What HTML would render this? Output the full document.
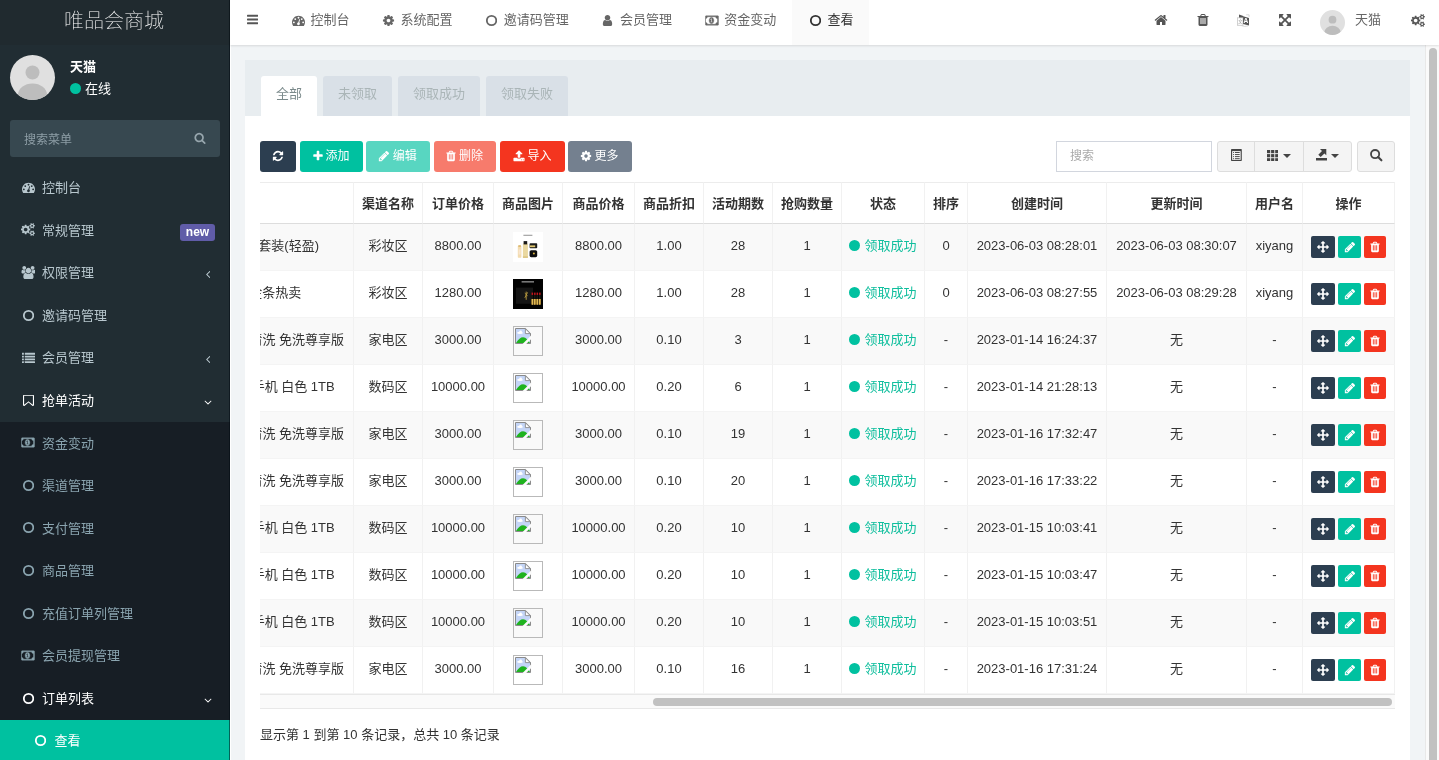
<!DOCTYPE html><html lang="zh-CN"><head><meta charset="utf-8"><title>唯品会商城</title><style>
*{box-sizing:border-box}
html,body{margin:0;padding:0}
body{width:1439px;height:760px;overflow:hidden;position:relative;background:#f1f4f6;color:#444;
 font-family:"Liberation Sans","Noto Sans CJK SC",sans-serif;font-size:13px;line-height:18.57px}
svg.ic{display:block;position:absolute}
#side,#nav,#panel{will-change:transform}
.abs{position:absolute}
/* sidebar */
#side{position:absolute;left:0;top:0;width:230px;height:760px;background:#212d33;overflow:hidden}
#logo{position:absolute;left:0;top:0;width:230px;height:45px;background:#202a2f;color:#fff;text-align:center;
 font-size:20px;font-weight:100;line-height:43px;letter-spacing:0;padding-right:2px}
#avatar{position:absolute;left:10px;top:55px;width:45px;height:45px;border-radius:50%;background:#e0e0e0;overflow:hidden}
#uname{position:absolute;left:70px;top:57px;color:#fff;font-weight:bold;font-size:13px;line-height:19px}
#ustat{position:absolute;left:85px;top:79px;color:#fff;font-size:13px;line-height:19px}
#sform{position:absolute;left:10px;top:120px;width:210px;height:37px;background:#374850;border-radius:3px}
#sform span{position:absolute;left:14px;top:10.5px;font-size:12px;color:#8e9ea6;line-height:19px}
.mi{position:absolute;left:0;width:230px;height:42.57px;color:#b8c7ce;font-size:13px;line-height:42.57px}
.mi .t{position:absolute;left:42px;top:1px;white-space:nowrap}
.mi.sub{color:#8aa4af}
.mi.on{color:#fff}
.mi.l3 .t{left:54.5px;top:0}
#submenu{position:absolute;left:0;top:422px;width:230px;height:340px;background:#171e25}
#active{position:absolute;left:0;top:720px;width:230px;height:42px;background:#00c1a0}
.lbl{position:absolute;left:180px;top:15.5px;width:35px;height:17px;border-radius:3px;background:#605ca8;color:#fff;
 font-weight:bold;font-size:12px;line-height:16px;text-align:center}
/* navbar */
#nav{position:absolute;left:230px;top:0;width:1209px;z-index:5;height:45px;background:#fff;box-shadow:0 1px 2px rgba(0,0,0,.11)}
.tab{position:absolute;top:0;height:45px;color:#666;font-size:13px;line-height:45px;white-space:nowrap}
.tab .t{position:absolute;left:35.3px;top:-3.5px}
.tab.on{background:#fafafa;color:#333}
#nuser{position:absolute;left:1125px;top:-3px;font-size:13px;line-height:45px;color:#666}
/* content */
#panel{position:absolute;left:245px;top:60px;width:1165px;height:720px;background:#fff}
#phead{position:absolute;left:0;top:0;width:1165px;height:56px;background:#e8edf0}
.ptab{position:absolute;top:16px;height:40px;border-radius:3px 3px 0 0;background:#d9e0e7;color:#aab5b7;font-size:13px;line-height:36px;text-align:center}
.ptab.on{background:#fff;color:#7b8a8b}
.btn{position:absolute;top:81px;height:31px;border-radius:3px;color:#fff;font-size:12px;line-height:31px;white-space:nowrap}
.btn .t{position:absolute;top:0}
.gbtn{position:absolute;top:81px;height:31px;background:#f4f4f4;border:1px solid #ddd}
#sinput{position:absolute;left:811px;top:81px;width:156px;height:31px;border:1px solid #d2d6de;background:#fff;color:#aaa;font-size:12px;line-height:29px;padding-left:13px}
/* table */
#twrap{position:absolute;left:15px;top:122px;width:1135px;height:512px;overflow:hidden}
table{position:absolute;right:0;top:0;border-collapse:separate;border-spacing:0;table-layout:fixed;font-size:13px;color:#333}
th,td{padding:0;text-align:center;white-space:nowrap;border-left:1px solid #f1f1f1;overflow:visible}
th{height:41px;border-top:1px solid #ececec;border-bottom:1px solid #ddd;font-weight:bold;line-height:38px;padding-top:2px;color:#333}
td{height:47px;border-bottom:1px solid #f4f4f4;line-height:44px;position:relative;vertical-align:top}
th:first-child,td:first-child{border-left:0}td:first-child{text-align:right}
th:last-child,td:last-child{border-right:1px solid #f1f1f1}
tr.odd td{background:#f9f9f9}
.st{color:#0fbe9d}
.img{display:inline-block;width:30px;height:30px;vertical-align:top;margin-top:8px}
.brk{border:1px solid #c0c0c0;background:#fff}
.ob{position:absolute;top:12px;height:22px;border-radius:2px}
#hscroll{position:absolute;left:15px;top:634px;width:1135px;height:15px;background:#fafafa;border-top:1px solid #e8e8e8;border-bottom:1px solid #e8e8e8}
#hthumb{position:absolute;left:393px;top:3px;width:739px;height:8px;border-radius:4px;background:#c1c1c1}
#pinfo{position:absolute;left:15px;top:665px;font-size:13px;color:#333;line-height:20px}
#vscroll{position:absolute;left:1425px;top:45px;width:14px;height:715px;background:#fafafa;border-left:1px solid #e8e8e8}
#vthumb{position:absolute;left:3px;top:3px;width:8px;height:800px;border-radius:4px;background:#c1c1c1}

.dot{display:inline-block;width:11px;height:11px;border-radius:50%;background:#00c1a0;margin-right:4px;vertical-align:middle;position:relative;top:-1px}

#side:after{content:'';position:absolute;right:0;top:0;width:1px;height:760px;background:rgba(0,8,16,.5)}
#wline{position:absolute;left:230px;top:45px;width:1px;height:715px;background:#fff}
</style></head><body>
<div id="side">
<div id="logo">唯品会商城</div>
<div id="avatar"><svg width="45" height="45" viewBox="0 0 45 45"><circle cx="22.5" cy="17.5" r="7" fill="#bdbdbd"/><ellipse cx="22.5" cy="40" rx="14.5" ry="11.5" fill="#bdbdbd"/></svg></div>
<div id="uname">天猫</div>
<div class="abs" style="left:70px;top:82.8px;width:11px;height:11px;border-radius:50%;background:#00c1a0"></div>
<div id="ustat">在线</div>
<div id="sform"><span>搜索菜单</span><svg class="ic" width="12.00" height="12.00" viewBox="0 0 1792 1792" style="left:184.30px;top:12.30px;"><path fill="#97a6ad" d="M1216 832q0-185-131.500-316.500t-316.500-131.500-316.500 131.500-131.500 316.500 131.500 316.500 316.500 131.500 316.500-131.500 131.500-316.500zm512 832q0 52-38 90t-90 38q-54 0-90-38l-343-342q-179 124-399 124-143 0-273.500-55.500t-225-150-150-225-55.500-273.500 55.500-273.500 150-225 225-150 273.500-55.500 273.500 55.500 225 150 150 225 55.500 273.500q0 220-124 399l343 343q37 37 37 90z"/></svg></div>
<div id="submenu"></div><div id="active"></div>
<div class="mi " style="top:166.10px"><svg class="ic" width="13.00" height="13.00" viewBox="0 0 1792 1792" style="left:21.85px;top:14.79px;"><path fill="#b8c7ce" d="M384 1152q0-53-37.500-90.500t-90.500-37.500-90.500 37.500-37.500 90.500 37.500 90.500 90.500 37.500 90.500-37.500 37.500-90.500zm192-448q0-53-37.500-90.500t-90.500-37.500-90.500 37.500-37.500 90.500 37.500 90.500 90.500 37.500 90.500-37.500 37.500-90.500zm428 481l101-382q6-26-7.500-48.500t-38.500-29.500-48 6.500-30 39.500l-101 382q-60 5-107 43.500t-63 98.500q-20 77 20 146t117 89 146-20 89-117q16-60-6-117t-72-91zm660-33q0-53-37.500-90.500t-90.500-37.500-90.500 37.500-37.500 90.500 37.500 90.500 90.500 37.500 90.500-37.500 37.500-90.500zm-640-640q0-53-37.500-90.500t-90.500-37.500-90.500 37.500-37.500 90.500 37.500 90.500 90.500 37.500 90.500-37.500 37.500-90.500zm448 192q0-53-37.500-90.500t-90.500-37.500-90.500 37.500-37.500 90.500 37.500 90.500 90.500 37.500 90.500-37.500 37.500-90.500zm320 448q0 261-141 483-19 29-54 29h-1402q-35 0-54-29-141-221-141-483 0-182 71-348t191-286 286-191 348-71 348 71 286 191 191 286 71 348z"/></svg><span class="t">控制台</span></div>
<div class="mi " style="top:208.67px"><svg class="ic" width="13.93" height="13.00" viewBox="0 0 1920 1792" style="left:21.39px;top:14.79px;"><path fill="#b8c7ce" d="M896 896q0-106-75-181t-181-75-181 75-75 181 75 181 181 75 181-75 75-181zm768 512q0-52-38-90t-90-38-90 38-38 90q0 53 37.500 90.500t90.500 37.500 90.500-37.500 37.500-90.500zm0-1024q0-52-38-90t-90-38-90 38-38 90q0 53 37.500 90.500t90.500 37.500 90.500-37.500 37.500-90.500zm-384 421v185q0 10-7 19.500t-16 10.500l-155 24q-11 35-32 76 34 48 90 115 7 11 7 20 0 12-7 19-23 30-82.500 89.500t-78.500 59.500q-11 0-21-7l-115-90q-37 19-77 31-11 108-23 155-7 24-30 24h-186q-11 0-20-7.500t-10-17.500l-23-153q-34-10-75-31l-118 89q-7 7-20 7-11 0-21-8-144-133-144-160 0-9 7-19 10-14 41-53t47-61q-23-44-35-82l-152-24q-10-1-17-9.500t-7-19.500v-185q0-10 7-19.500t16-10.500l155-24q11-35 32-76-34-48-90-115-7-11-7-20 0-12 7-20 22-30 82-89t79-59q11 0 21 7l115 90q34-18 77-32 11-108 23-154 7-24 30-24h186q11 0 20 7.500t10 17.500l23 153q34 10 75 31l118-89q8-7 20-7 11 0 21 8 144 133 144 160 0 8-7 19-12 16-42 54t-45 60q23 48 34 82l152 23q10 2 17 10.500t7 19.500zm640 533v140q0 16-149 31-12 27-30 52 51 113 51 138 0 4-4 7-122 71-124 71-8 0-46-47t-52-68q-20 2-30 2t-30-2q-14 21-52 68t-46 47q-2 0-124-71-4-3-4-7 0-25 51-138-18-25-30-52-149-15-149-31v-140q0-16 149-31 13-29 30-52-51-113-51-138 0-4 4-7 4-2 35-20t59-34 30-16q8 0 46 46.500t52 67.500q20-2 30-2t30 2q51-71 92-112l6-2q4 0 124 70 4 3 4 7 0 25-51 138 17 23 30 52 149 15 149 31zm0-1024v140q0 16-149 31-12 27-30 52 51 113 51 138 0 4-4 7-122 71-124 71-8 0-46-47t-52-68q-20 2-30 2t-30-2q-14 21-52 68t-46 47q-2 0-124-71-4-3-4-7 0-25 51-138-18-25-30-52-149-15-149-31v-140q0-16 149-31 13-29 30-52-51-113-51-138 0-4 4-7 4-2 35-20t59-34 30-16q8 0 46 46.500t52 67.500q20-2 30-2t30 2q51-71 92-112l6-2q4 0 124 70 4 3 4 7 0 25-51 138 17 23 30 52 149 15 149 31z"/></svg><span class="t">常规管理</span><span class="lbl">new</span></div>
<div class="mi " style="top:251.24px"><svg class="ic" width="13.93" height="13.00" viewBox="0 0 1920 1792" style="left:21.39px;top:14.79px;"><path fill="#b8c7ce" d="M657 896q-162 5-265 128h-134q-82 0-138-40.500t-56-118.500q0-353 124-353 6 0 43.500 21t97.500 42.500 119 21.500q67 0 133-23-5 37-5 66 0 139 81 256zm1071 637q0 120-73 189.500t-194 69.500h-874q-121 0-194-69.500t-73-189.500q0-53 3.500-103.500t14-109 26.500-108.500 43-97.500 62-81 85.500-53.500 111.500-20q10 0 43 21.500t73 48 107 48 135 21.500 135-21.500 107-48 73-48 43-21.500q61 0 111.500 20t85.500 53.500 62 81 43 97.500 26.500 108.500 14 109 3.500 103.500zm-1024-1277q0 106-75 181t-181 75-181-75-75-181 75-181 181-75 181 75 75 181zm704 384q0 159-112.500 271.500t-271.500 112.500-271.500-112.500-112.500-271.500 112.500-271.500 271.500-112.500 271.500 112.500 112.500 271.500zm576 225q0 78-56 118.500t-138 40.500h-134q-103-123-265-128 81-117 81-256 0-29-5-66 66 23 133 23 59 0 119-21.500t97.500-42.500 43.500-21q124 0 124 353zm-128-609q0 106-75 181t-181 75-181-75-75-181 75-181 181-75 181 75 75 181z"/></svg><span class="t">权限管理</span><svg class="ic" width="4.64" height="13.00" viewBox="0 0 640 1792" style="left:205.58px;top:16.98px;"><path fill="#b8c7ce" d="M595 576q0 13-10 23l-393 393 393 393q10 10 10 23t-10 23l-50 50q-10 10-23 10t-23-10l-466-466q-10-10-10-23t10-23l466-466q10-10 23-10t23 10l50 50q10 10 10 23z" transform="translate(13,-96)"/></svg></div>
<div class="mi " style="top:293.81px"><svg class="ic" width="11.14" height="13.00" viewBox="0 0 1536 1792" style="left:22.78px;top:14.79px;"><circle cx="768" cy="896" r="650" fill="none" stroke="#b8c7ce" stroke-width="250"/></svg><span class="t">邀请码管理</span></div>
<div class="mi " style="top:336.38px"><svg class="ic" width="13.00" height="13.00" viewBox="0 0 1792 1792" style="left:21.85px;top:14.79px;"><rect x="0" y="256" width="256" height="256" rx="32" fill="#b8c7ce"/><rect x="384" y="256" width="1408" height="256" rx="32" fill="#b8c7ce"/><rect x="0" y="640" width="256" height="256" rx="32" fill="#b8c7ce"/><rect x="384" y="640" width="1408" height="256" rx="32" fill="#b8c7ce"/><rect x="0" y="1024" width="256" height="256" rx="32" fill="#b8c7ce"/><rect x="384" y="1024" width="1408" height="256" rx="32" fill="#b8c7ce"/><rect x="0" y="1408" width="256" height="256" rx="32" fill="#b8c7ce"/><rect x="384" y="1408" width="1408" height="256" rx="32" fill="#b8c7ce"/></svg><span class="t">会员管理</span><svg class="ic" width="4.64" height="13.00" viewBox="0 0 640 1792" style="left:205.58px;top:16.98px;"><path fill="#b8c7ce" d="M595 576q0 13-10 23l-393 393 393 393q10 10 10 23t-10 23l-50 50q-10 10-23 10t-23-10l-466-466q-10-10-10-23t10-23l466-466q10-10 23-10t23 10l50 50q10 10 10 23z" transform="translate(13,-96)"/></svg></div>
<div class="mi on" style="top:378.95px"><svg preserveAspectRatio="none" class="ic" width="11.00" height="13.00" viewBox="0 0 1280 1792" style="left:22.85px;top:14.79px;"><path fill="#fff" d="M1152 256h-1024v1242l423-406 89-85 89 85 423 406v-1242zm12-128q23 0 44 9 33 13 52.500 41t19.500 62v1289q0 34-19.500 62t-52.500 41q-19 8-44 8-48 0-83-32l-441-424-441 424q-36 33-83 33-23 0-44-9-33-13-52.500-41t-19.500-62v-1289q0-34 19.500-62t52.500-41q21-9 44-9h1048z"/></svg><span class="t">抢单活动</span><svg class="ic" width="8.04" height="12.50" viewBox="0 0 1152 1792" style="left:203.98px;top:16.64px;"><path fill="#fff" d="M1075 736q0 13-10 23l-466 466q-10 10-23 10t-23-10l-466-466q-10-10-10-23t10-23l50-50q10-10 23-10t23 10l393 393 393-393q10-10 23-10t23 10l50 50q10 10 10 23z"/></svg></div>
<div class="mi sub" style="top:421.52px"><svg class="ic" width="13.93" height="13.00" viewBox="0 0 1920 1792" style="left:21.39px;top:14.79px;"><path fill="#8aa4af" stroke="#8aa4af" stroke-width="60" d="M704 1152h384v-96h-128v-448h-114l-148 137 77 80q42-37 55-57h2v288h-128v96zm512-256q0 70-21 142t-59.500 134-101.500 101-138 39-138-39-101.500-101-59.500-134-21-142 21-142 59.500-134 101.500-101 138-39 138 39 101.500 101 59.500 134 21 142zm512 256v-512q-106 0-181-75t-75-181h-1152q0 106-75 181t-181 75v512q106 0 181 75t75 181h1152q0-106 75-181t181-75zm128-832v1152q0 26-19 45t-45 19h-1664q-26 0-45-19t-19-45v-1152q0-26 19-45t45-19h1664q26 0 45 19t19 45z"/></svg><span class="t">资金变动</span></div>
<div class="mi sub" style="top:464.09px"><svg class="ic" width="11.14" height="13.00" viewBox="0 0 1536 1792" style="left:22.78px;top:14.79px;"><circle cx="768" cy="896" r="650" fill="none" stroke="#8aa4af" stroke-width="250"/></svg><span class="t">渠道管理</span></div>
<div class="mi sub" style="top:506.66px"><svg class="ic" width="11.14" height="13.00" viewBox="0 0 1536 1792" style="left:22.78px;top:14.79px;"><circle cx="768" cy="896" r="650" fill="none" stroke="#8aa4af" stroke-width="250"/></svg><span class="t">支付管理</span></div>
<div class="mi sub" style="top:549.23px"><svg class="ic" width="11.14" height="13.00" viewBox="0 0 1536 1792" style="left:22.78px;top:14.79px;"><circle cx="768" cy="896" r="650" fill="none" stroke="#8aa4af" stroke-width="250"/></svg><span class="t">商品管理</span></div>
<div class="mi sub" style="top:591.80px"><svg class="ic" width="11.14" height="13.00" viewBox="0 0 1536 1792" style="left:22.78px;top:14.79px;"><circle cx="768" cy="896" r="650" fill="none" stroke="#8aa4af" stroke-width="250"/></svg><span class="t">充值订单列管理</span></div>
<div class="mi sub" style="top:634.37px"><svg class="ic" width="13.93" height="13.00" viewBox="0 0 1920 1792" style="left:21.39px;top:14.79px;"><path fill="#8aa4af" stroke="#8aa4af" stroke-width="60" d="M704 1152h384v-96h-128v-448h-114l-148 137 77 80q42-37 55-57h2v288h-128v96zm512-256q0 70-21 142t-59.500 134-101.500 101-138 39-138-39-101.500-101-59.500-134-21-142 21-142 59.500-134 101.500-101 138-39 138 39 101.500 101 59.500 134 21 142zm512 256v-512q-106 0-181-75t-75-181h-1152q0 106-75 181t-181 75v512q106 0 181 75t75 181h1152q0-106 75-181t181-75zm128-832v1152q0 26-19 45t-45 19h-1664q-26 0-45-19t-19-45v-1152q0-26 19-45t45-19h1664q26 0 45 19t19 45z"/></svg><span class="t">会员提现管理</span></div>
<div class="mi on" style="top:676.94px"><svg class="ic" width="11.14" height="13.00" viewBox="0 0 1536 1792" style="left:22.78px;top:14.79px;"><circle cx="768" cy="896" r="650" fill="none" stroke="#fff" stroke-width="250"/></svg><span class="t">订单列表</span><svg class="ic" width="8.04" height="12.50" viewBox="0 0 1152 1792" style="left:203.98px;top:16.64px;"><path fill="#fff" d="M1075 736q0 13-10 23l-466 466q-10 10-23 10t-23-10l-466-466q-10-10-10-23t10-23l50-50q10-10 23-10t23 10l393 393 393-393q10-10 23-10t23 10l50 50q10 10 10 23z"/></svg></div>
<div class="mi on l3" style="top:719.51px"><svg class="ic" width="11.14" height="13.00" viewBox="0 0 1536 1792" style="left:34.78px;top:14.79px;"><circle cx="768" cy="896" r="650" fill="none" stroke="#fff" stroke-width="250"/></svg><span class="t">查看</span></div>
</div>
<div id="nav">
<svg class="ic" width="11.14" height="13.00" viewBox="0 0 1536 1792" style="left:16.73px;top:12.80px;"><rect x="0" y="256" width="1536" height="256" rx="64" fill="#555"/><rect x="0" y="768" width="1536" height="256" rx="64" fill="#555"/><rect x="0" y="1280" width="1536" height="256" rx="64" fill="#555"/></svg>
<div class="tab " style="left:45.1px;width:89.3px"><svg class="ic" width="13.00" height="13.00" viewBox="0 0 1792 1792" style="left:16.85px;top:13.70px;"><path fill="#666" d="M384 1152q0-53-37.500-90.500t-90.500-37.500-90.500 37.500-37.500 90.500 37.500 90.500 90.500 37.500 90.500-37.500 37.500-90.500zm192-448q0-53-37.500-90.500t-90.500-37.500-90.500 37.500-37.500 90.500 37.500 90.500 90.500 37.500 90.500-37.500 37.500-90.500zm428 481l101-382q6-26-7.500-48.500t-38.500-29.500-48 6.500-30 39.500l-101 382q-60 5-107 43.500t-63 98.500q-20 77 20 146t117 89 146-20 89-117q16-60-6-117t-72-91zm660-33q0-53-37.500-90.500t-90.500-37.500-90.500 37.500-37.500 90.500 37.500 90.500 90.500 37.500 90.500-37.500 37.500-90.500zm-640-640q0-53-37.500-90.500t-90.500-37.500-90.500 37.500-37.500 90.500 37.500 90.500 90.500 37.500 90.500-37.500 37.500-90.500zm448 192q0-53-37.500-90.500t-90.500-37.500-90.500 37.500-37.500 90.500 37.500 90.500 90.500 37.500 90.500-37.500 37.500-90.500zm320 448q0 261-141 483-19 29-54 29h-1402q-35 0-54-29-141-221-141-483 0-182 71-348t191-286 286-191 348-71 348 71 286 191 191 286 71 348z"/></svg><span class="t">控制台</span></div>
<div class="tab " style="left:135.2px;width:102.3px"><svg class="ic" width="13.00" height="13.00" viewBox="0 0 1792 1792" style="left:16.85px;top:13.70px;"><path fill="#666" d="M1152 896q0-106-75-181t-181-75-181 75-75 181 75 181 181 75 181-75 75-181zm512-109v222q0 12-8 23t-20 13l-185 28q-19 54-39 91 35 50 107 138 10 12 10 25t-9 23q-27 37-99 108t-94 71q-12 0-26-9l-138-108q-44 23-91 38-16 136-29 186-7 28-36 28h-222q-14 0-24.500-8.500t-11.500-21.500l-28-184q-49-16-90-37l-141 107q-10 9-25 9-14 0-25-11-126-114-165-168-7-10-7-23 0-12 8-23 15-21 51-66.500t54-70.500q-27-50-41-99l-183-27q-13-2-21-12.500t-8-23.500v-222q0-12 8-23t19-13l186-28q14-46 39-92-40-57-107-138-10-12-10-24 0-10 9-23 26-36 98.500-107.500t94.500-71.500q13 0 26 10l138 107q44-23 91-38 16-136 29-186 7-28 36-28h222q14 0 24.500 8.500t11.500 21.500l28 184q49 16 90 37l142-107q9-9 24-9 13 0 25 10 129 119 165 170 7 8 7 22 0 12-8 23-15 21-51 66.500t-54 70.500q26 50 41 98l183 28q13 2 21 12.500t8 23.500z"/></svg><span class="t">系统配置</span></div>
<div class="tab " style="left:238.4px;width:115.3px"><svg class="ic" width="11.14" height="13.00" viewBox="0 0 1536 1792" style="left:17.78px;top:13.70px;"><circle cx="768" cy="896" r="650" fill="none" stroke="#666" stroke-width="250"/></svg><span class="t">邀请码管理</span></div>
<div class="tab " style="left:354.6px;width:102.3px"><svg class="ic" width="13.00" height="13.00" viewBox="0 0 1792 1792" style="left:16.85px;top:13.70px;"><path fill="#666" d="M1536 1399q0 109-62.500 187t-150.500 78h-854q-88 0-150.500-78t-62.500-187q0-85 8.500-160.500t31.500-152 58.500-131 94-89 134.500-34.500q131 128 313 128t313-128q76 0 134.500 34.500t94 89 58.500 131 31.500 152 8.500 160.500zm-256-887q0 159-112.500 271.500t-271.500 112.500-271.500-112.500-112.500-271.500 112.500-271.500 271.500-112.500 271.500 112.500 112.500 271.500z"/></svg><span class="t">会员管理</span></div>
<div class="tab " style="left:459.0px;width:102.3px"><svg class="ic" width="13.93" height="13.00" viewBox="0 0 1920 1792" style="left:16.39px;top:13.70px;"><path fill="#666" stroke="#666" stroke-width="60" d="M704 1152h384v-96h-128v-448h-114l-148 137 77 80q42-37 55-57h2v288h-128v96zm512-256q0 70-21 142t-59.500 134-101.500 101-138 39-138-39-101.500-101-59.500-134-21-142 21-142 59.500-134 101.500-101 138-39 138 39 101.500 101 59.500 134 21 142zm512 256v-512q-106 0-181-75t-75-181h-1152q0 106-75 181t-181 75v512q106 0 181 75t75 181h1152q0-106 75-181t181-75zm128-832v1152q0 26-19 45t-45 19h-1664q-26 0-45-19t-19-45v-1152q0-26 19-45t45-19h1664q26 0 45 19t19 45z"/></svg><span class="t">资金变动</span></div>
<div class="tab on" style="left:562.2px;width:76.8px"><svg class="ic" width="11.14" height="13.00" viewBox="0 0 1536 1792" style="left:17.78px;top:13.70px;"><circle cx="768" cy="896" r="650" fill="none" stroke="#333" stroke-width="250"/></svg><span class="t">查看</span></div>
<svg class="ic" width="14.00" height="14.00" viewBox="0 0 1792 1792" style="left:924.10px;top:13.20px;"><path fill="#555" d="M1472 992v480q0 26-19 45t-45 19h-384v-384h-256v384h-384q-26 0-45-19t-19-45v-480q0-1 .5-3t.5-3l575-474 575 474q1 2 1 6zm223-69l-62 74q-8 9-21 11h-3q-13 0-21-7l-692-577-692 577q-12 8-24 7-13-2-21-11l-62-74q-8-10-7-23.500t11-21.500l719-599q32-26 76-26t76 26l244 204v-195q0-14 9-23t23-9h192q14 0 23 9t9 23v408l219 182q10 8 11 21.500t-7 23.500z"/></svg>
<svg class="ic" width="14.00" height="14.00" viewBox="0 0 1792 1792" style="left:965.60px;top:13.30px;"><path fill="#555" d="M704 1376v-704q0-14-9-23t-23-9h-64q-14 0-23 9t-9 23v704q0 14 9 23t23 9h64q14 0 23-9t9-23zm256 0v-704q0-14-9-23t-23-9h-64q-14 0-23 9t-9 23v704q0 14 9 23t23 9h64q14 0 23-9t9-23zm256 0v-704q0-14-9-23t-23-9h-64q-14 0-23 9t-9 23v704q0 14 9 23t23 9h64q14 0 23-9t9-23zm-544-992h448l-48-117q-7-9-17-11h-317q-10 2-17 11zm928 32v64q0 14-9 23t-23 9h-96v948q0 83-47 143.500t-113 60.500h-832q-66 0-113-58.500t-47-141.500v-952h-96q-14 0-23-9t-9-23v-64q0-14 9-23t23-9h309l70-167q15-37 54-63t79-26h320q40 0 79 26t54 63l70 167h309q14 0 23 9t9 23z"/></svg>
<svg class="ic" width="13" height="13.5" viewBox="0 0 13 13.5" style="left:1007.0px;top:13.5px"><rect x=".4" y="3.8" width="5.6" height="7.5" fill="#fff" stroke="#c6c6c6" stroke-width=".8"/><path d="M2 .5L6.3 2.1V3.5H2z" fill="#555"/><path d="M6.1 2.2L12 4V11.6L6.1 9.9z" fill="#555"/><path d="M9.2 .8H12.1V3M4.6 11.7Q7.5 13.1 11 11.9" fill="none" stroke="#c9c9c9" stroke-width=".7"/><text x="9.0" y="8.5" font-family="Liberation Sans, sans-serif" font-size="6.6" font-weight="bold" fill="#fff" text-anchor="middle">A</text><text x="3.2" y="8.6" font-family="Liberation Sans, Noto Sans CJK SC, sans-serif" font-size="4.6" fill="#999" text-anchor="middle">文</text></svg>
<svg class="ic" width="14.00" height="14.00" viewBox="0 0 1792 1792" style="left:1047.60px;top:13.30px;"><path fill="#555" d="M1411 541l-355 355 355 355 144-144q29-31 70-14 39 17 39 59v448q0 26-19 45t-45 19h-448q-42 0-59-40-17-39 14-69l144-144-355-355-355 355 144 144q31 30 14 69-17 40-59 40h-448q-26 0-45-19t-19-45v-448q0-42 40-59 39-17 69 14l144 144 355-355-355-355-144 144q-19 19-45 19-12 0-24-5-40-17-40-59v-448q0-26 19-45t45-19h448q42 0 59 40 17 39-14 69l-144 144 355 355 355-355-144-144q-31-30-14-69 17-40 59-40h448q26 0 45 19t19 45v448q0 42-39 59-13 5-25 5-26 0-45-19z"/></svg>
<div class="abs" style="left:1090px;top:10px;width:25px;height:25px;border-radius:50%;background:#e0e0e0;overflow:hidden"><svg width="25" height="25" viewBox="0 0 45 45"><circle cx="22.5" cy="17.5" r="7" fill="#bdbdbd"/><ellipse cx="22.5" cy="40" rx="14.5" ry="11.5" fill="#bdbdbd"/></svg></div>
<div id="nuser">天猫</div>
<svg class="ic" width="13.93" height="13.00" viewBox="0 0 1920 1792" style="left:1181.24px;top:13.70px;"><path fill="#555" d="M896 896q0-106-75-181t-181-75-181 75-75 181 75 181 181 75 181-75 75-181zm768 512q0-52-38-90t-90-38-90 38-38 90q0 53 37.500 90.500t90.500 37.500 90.500-37.500 37.500-90.500zm0-1024q0-52-38-90t-90-38-90 38-38 90q0 53 37.500 90.500t90.500 37.500 90.500-37.500 37.500-90.500zm-384 421v185q0 10-7 19.500t-16 10.500l-155 24q-11 35-32 76 34 48 90 115 7 11 7 20 0 12-7 19-23 30-82.500 89.500t-78.500 59.500q-11 0-21-7l-115-90q-37 19-77 31-11 108-23 155-7 24-30 24h-186q-11 0-20-7.500t-10-17.500l-23-153q-34-10-75-31l-118 89q-7 7-20 7-11 0-21-8-144-133-144-160 0-9 7-19 10-14 41-53t47-61q-23-44-35-82l-152-24q-10-1-17-9.500t-7-19.500v-185q0-10 7-19.500t16-10.500l155-24q11-35 32-76-34-48-90-115-7-11-7-20 0-12 7-20 22-30 82-89t79-59q11 0 21 7l115 90q34-18 77-32 11-108 23-154 7-24 30-24h186q11 0 20 7.500t10 17.500l23 153q34 10 75 31l118-89q8-7 20-7 11 0 21 8 144 133 144 160 0 8-7 19-12 16-42 54t-45 60q23 48 34 82l152 23q10 2 17 10.500t7 19.500zm640 533v140q0 16-149 31-12 27-30 52 51 113 51 138 0 4-4 7-122 71-124 71-8 0-46-47t-52-68q-20 2-30 2t-30-2q-14 21-52 68t-46 47q-2 0-124-71-4-3-4-7 0-25 51-138-18-25-30-52-149-15-149-31v-140q0-16 149-31 13-29 30-52-51-113-51-138 0-4 4-7 4-2 35-20t59-34 30-16q8 0 46 46.500t52 67.500q20-2 30-2t30 2q51-71 92-112l6-2q4 0 124 70 4 3 4 7 0 25-51 138 17 23 30 52 149 15 149 31zm0-1024v140q0 16-149 31-12 27-30 52 51 113 51 138 0 4-4 7-122 71-124 71-8 0-46-47t-52-68q-20 2-30 2t-30-2q-14 21-52 68t-46 47q-2 0-124-71-4-3-4-7 0-25 51-138-18-25-30-52-149-15-149-31v-140q0-16 149-31 13-29 30-52-51-113-51-138 0-4 4-7 4-2 35-20t59-34 30-16q8 0 46 46.500t52 67.500q20-2 30-2t30 2q51-71 92-112l6-2q4 0 124 70 4 3 4 7 0 25-51 138 17 23 30 52 149 15 149 31z"/></svg>
</div>
<div id="panel"><div id="phead">
<div class="ptab on" style="left:16px;width:56px">全部</div>
<div class="ptab " style="left:78px;width:69px">未领取</div>
<div class="ptab " style="left:153px;width:82px">领取成功</div>
<div class="ptab " style="left:241px;width:82px">领取失败</div>
</div>
<div class="btn" style="left:15px;width:36px;background:#2c3e50;opacity:1.0"><svg class="ic" width="12.00" height="12.00" viewBox="0 0 1792 1792" style="left:12.20px;top:9.30px;"><path fill="#fff" d="M1639 1056q0 5-1 7-64 268-268 434.500t-478 166.500q-146 0-282.500-55t-243.500-157l-129 129q-19 19-45 19t-45-19-19-45v-448q0-26 19-45t45-19h448q26 0 45 19t19 45-19 45l-137 137q71 66 161 102t187 36q134 0 250-65t186-179q11-17 53-117 8-23 30-23h192q13 0 22.500 9.500t9.500 22.500zm25-800v448q0 26-19 45t-45 19h-448q-26 0-45-19t-19-45 19-45l138-138q-148-137-349-137-134 0-250 65t-186 179q-11 17-53 117-8 23-30 23h-199q-13 0-22.500-9.500t-9.500-22.500v-7q65-268 270-434.500t480-166.500q146 0 284 55.500t245 156.500l130-129q19-19 45-19t45 19 19 45z"/></svg></div>
<div class="btn" style="left:55px;width:63px;background:#00c1a0;opacity:1.0"><svg class="ic" width="12.00" height="12.00" viewBox="0 0 1792 1792" style="left:11.50px;top:9.30px;"><path fill="#fff" d="M1600 736v192q0 40-28 68t-68 28h-416v416q0 40-28 68t-68 28h-192q-40 0-68-28t-28-68v-416h-416q-40 0-68-28t-28-68v-192q0-40 28-68t68-28h416v-416q0-40 28-68t68-28h192q40 0 68 28t28 68v416h416q40 0 68 28t28 68z"/></svg><span class="t" style="left:25.5px">添加</span></div>
<div class="btn" style="left:121px;width:64px;background:#00c1a0;opacity:0.65"><svg class="ic" width="12.00" height="12.00" viewBox="0 0 1792 1792" style="left:12.00px;top:9.30px;"><path fill="#fff" d="M491 1536l91-91-235-235-91 91v107h128v128h107zm523-928q0-22-22-22-10 0-17 7l-542 542q-7 7-7 17 0 22 22 22 10 0 17-7l542-542q7-7 7-17zm-54-192l416 416-832 832h-416v-416zm683 96q0 53-37 90l-166 166-416-416 166-165q36-38 90-38 53 0 91 38l235 234q37 39 37 91z"/></svg><span class="t" style="left:26.8px">编辑</span></div>
<div class="btn" style="left:189px;width:62px;background:#f4351f;opacity:0.65"><svg class="ic" width="12.00" height="12.00" viewBox="0 0 1792 1792" style="left:11.00px;top:9.30px;"><path fill="#fff" d="M704 1376v-704q0-14-9-23t-23-9h-64q-14 0-23 9t-9 23v704q0 14 9 23t23 9h64q14 0 23-9t9-23zm256 0v-704q0-14-9-23t-23-9h-64q-14 0-23 9t-9 23v704q0 14 9 23t23 9h64q14 0 23-9t9-23zm256 0v-704q0-14-9-23t-23-9h-64q-14 0-23 9t-9 23v704q0 14 9 23t23 9h64q14 0 23-9t9-23zm-544-992h448l-48-117q-7-9-17-11h-317q-10 2-17 11zm928 32v64q0 14-9 23t-23 9h-96v948q0 83-47 143.500t-113 60.500h-832q-66 0-113-58.500t-47-141.500v-952h-96q-14 0-23-9t-9-23v-64q0-14 9-23t23-9h309l70-167q15-37 54-63t79-26h320q40 0 79 26t54 63l70 167h309q14 0 23 9t9 23z"/></svg><span class="t" style="left:25.0px">删除</span></div>
<div class="btn" style="left:255px;width:65px;background:#f4351f;opacity:1.0"><svg class="ic" width="12.00" height="12.00" viewBox="0 0 1792 1792" style="left:12.50px;top:9.30px;"><path fill="#fff" d="M1344 1472q0-26-19-45t-45-19-45 19-19 45 19 45 45 19 45-19 19-45zm256 0q0-26-19-45t-45-19-45 19-19 45 19 45 45 19 45-19 19-45zm128-224v320q0 40-28 68t-68 28h-1472q-40 0-68-28t-28-68v-320q0-40 28-68t68-28h427q21 56 70.500 92t110.500 36h256q61 0 110.500-36t70.500-92h427q40 0 68 28t28 68zm-325-648q-17 40-59 40h-256v448q0 26-19 45t-45 19h-256q-26 0-45-19t-19-45v-448h-256q-42 0-59-40-17-39 14-69l448-448q18-19 45-19t45 19l448 448q31 30 14 69z"/></svg><span class="t" style="left:27.5px">导入</span></div>
<div class="btn" style="left:323px;width:64px;background:#74808f;opacity:1.0"><svg class="ic" width="12.00" height="12.00" viewBox="0 0 1792 1792" style="left:12.10px;top:9.30px;"><path fill="#fff" d="M1152 896q0-106-75-181t-181-75-181 75-75 181 75 181 181 75 181-75 75-181zm512-109v222q0 12-8 23t-20 13l-185 28q-19 54-39 91 35 50 107 138 10 12 10 25t-9 23q-27 37-99 108t-94 71q-12 0-26-9l-138-108q-44 23-91 38-16 136-29 186-7 28-36 28h-222q-14 0-24.500-8.500t-11.500-21.500l-28-184q-49-16-90-37l-141 107q-10 9-25 9-14 0-25-11-126-114-165-168-7-10-7-23 0-12 8-23 15-21 51-66.500t54-70.500q-27-50-41-99l-183-27q-13-2-21-12.500t-8-23.500v-222q0-12 8-23t19-13l186-28q14-46 39-92-40-57-107-138-10-12-10-24 0-10 9-23 26-36 98.500-107.500t94.500-71.500q13 0 26 10l138 107q44-23 91-38 16-136 29-186 7-28 36-28h222q14 0 24.500 8.500t11.500 21.500l28 184q49 16 90 37l142-107q9-9 24-9 13 0 25 10 129 119 165 170 7 8 7 22 0 12-8 23-15 21-51 66.500t-54 70.500q26 50 41 98l183 28q13 2 21 12.500t8 23.500z"/></svg><span class="t" style="left:26.6px">更多</span></div>
<div id="sinput">搜索</div>
<div class="gbtn" style="left:972px;width:38px;border-radius:3px 0 0 3px"></div>
<div class="gbtn" style="left:1009px;width:50px"></div>
<div class="gbtn" style="left:1058px;width:49px;border-radius:0 3px 3px 0"></div>
<div class="gbtn" style="left:1112px;width:38px;border-radius:3px"></div>
<svg class="ic" width="10.8" height="12" viewBox="0 0 10.8 12" style="left:986.2px;top:88.9px"><rect width="10.8" height="12" rx=".7" fill="#444"/><rect x="1.15" y="2.1" width="8.5" height="8.8" fill="#f7f7f7"/><rect x="2.1" y="3.05" width="1" height=".95" fill="#444"/><rect x="4" y="3.05" width="4.7" height=".95" fill="#444"/><rect x="2.1" y="5.10" width="1" height=".95" fill="#444"/><rect x="4" y="5.10" width="4.7" height=".95" fill="#444"/><rect x="2.1" y="7.15" width="1" height=".95" fill="#444"/><rect x="4" y="7.15" width="4.7" height=".95" fill="#444"/><rect x="2.1" y="9.20" width="1" height=".95" fill="#444"/><rect x="4" y="9.20" width="4.7" height=".95" fill="#444"/></svg>
<svg class="ic" width="11.4" height="11.4" viewBox="0 0 11.4 11.4" style="left:1022.0px;top:89.9px"><rect x="0.0" y="0.0" width="3.2" height="3.2" fill="#444"/><rect x="0.0" y="4.1" width="3.2" height="3.2" fill="#444"/><rect x="0.0" y="8.2" width="3.2" height="3.2" fill="#444"/><rect x="4.1" y="0.0" width="3.2" height="3.2" fill="#444"/><rect x="4.1" y="4.1" width="3.2" height="3.2" fill="#444"/><rect x="4.1" y="8.2" width="3.2" height="3.2" fill="#444"/><rect x="8.2" y="0.0" width="3.2" height="3.2" fill="#444"/><rect x="8.2" y="4.1" width="3.2" height="3.2" fill="#444"/><rect x="8.2" y="8.2" width="3.2" height="3.2" fill="#444"/></svg>
<svg class="ic" width="8" height="4" viewBox="0 0 8 4" style="left:1038.3px;top:94.0px"><path d="M0 0h8L4 4z" fill="#444"/></svg>
<svg class="ic" width="11.3" height="11.6" viewBox="0 0 11.3 11.6" style="left:1070.7px;top:89.2px"><path fill="#444" d="M0 8.9h11.2v2.6H0zM4 0H10.3V6.3L8.4 4.4 4.7 8.1 2.3 5.7 6 2z"/></svg>
<svg class="ic" width="8" height="4" viewBox="0 0 8 4" style="left:1086.2px;top:94.0px"><path d="M0 0h8L4 4z" fill="#444"/></svg>
<svg class="ic" width="13" height="13" viewBox="0 0 13 13" style="left:1124.9px;top:88.8px"><circle cx="5.1" cy="5.1" r="4.1" fill="none" stroke="#444" stroke-width="1.8"/><path d="M8.1 8.1L11.4 11.3" stroke="#444" stroke-width="2.1" stroke-linecap="round"/></svg>
<div id="twrap"><table style="width:1442px"><colgroup><col style="width:400px"><col style="width:69px"><col style="width:71px"><col style="width:69px"><col style="width:72px"><col style="width:69px"><col style="width:69px"><col style="width:69px"><col style="width:83px"><col style="width:43px"><col style="width:139px"><col style="width:140px"><col style="width:56px"><col style="width:93px"></colgroup>
<thead><tr><th>商品名称</th><th>渠道名称</th><th>订单价格</th><th>商品图片</th><th>商品价格</th><th>商品折扣</th><th>活动期数</th><th>抢购数量</th><th>状态</th><th>排序</th><th>创建时间</th><th>更新时间</th><th>用户名</th><th>操作</th></tr></thead><tbody>
<tr class="odd"><td style="padding-right:34.0px">香奈儿奢华精萃护肤套装(轻盈)</td><td>彩妆区</td><td>8800.00</td><td><svg class="img" viewBox="0 0 30 30"><rect width="30" height="30" fill="#fff"/><rect x="10.4" y="2.7" width="9" height="1.3" fill="#555" opacity=".5"/><rect x="4.8" y="14" width="3.6" height="11.7" rx=".6" fill="#f3dcb0"/><rect x="5.3" y="13.2" width="2.6" height="1.6" fill="#d9b566"/><rect x="5.6" y="17.5" width="2" height="5" fill="#f9e6cf"/><rect x="9.9" y="11.5" width="5" height="14.2" rx=".5" fill="#ead8a0"/><rect x="10.6" y="9.1" width="3.6" height="3.3" fill="#1a1a1a"/><rect x="9.9" y="24.5" width="5" height="1.2" fill="#d6bd74"/><rect x="16.6" y="11.2" width="7.6" height="5" rx=".8" fill="#1c1c1c"/><rect x="17" y="13.4" width="5.2" height="1.8" fill="#e2c870"/><rect x="16.6" y="18.2" width="7.6" height="7" rx="1.6" fill="#0d0d0d"/><circle cx="20.9" cy="21.4" r="1" fill="#d7b13f"/></svg></td><td>8800.00</td><td>1.00</td><td>28</td><td>1</td><td><span class="st"><span class="dot"></span>领取成功</span></td><td>0</td><td>2023-06-03 08:28:01</td><td>2023-06-03 08:30:07</td><td>xiyang</td><td><span class="ob" style="left:8.0px;width:24px;background:#2c3e50"><svg class="ic" width="12.00" height="12.00" viewBox="0 0 1792 1792" style="left:6.00px;top:5.00px;"><path fill="#fff" d="M1792 896q0 26-19 45l-256 256q-19 19-45 19t-45-19-19-45v-128h-384v384h128q26 0 45 19t19 45-19 45l-256 256q-19 19-45 19t-45-19l-256-256q-19-19-19-45t19-45 45-19h128v-384h-384v128q0 26-19 45t-45 19-45-19l-256-256q-19-19-19-45t19-45l256-256q19-19 45-19t45 19 19 45v128h384v-384h-128q-26 0-45-19t-19-45 19-45l256-256q19-19 45-19t45 19l256 256q19 19 19 45t-19 45-45 19h-128v384h384v-128q0-26 19-45t45-19 45 19l256 256q19 19 19 45z"/></svg></span><span class="ob" style="left:35.0px;width:23px;background:#00c1a0"><svg class="ic" width="12.00" height="12.00" viewBox="0 0 1792 1792" style="left:5.50px;top:5.00px;"><path fill="#fff" d="M491 1536l91-91-235-235-91 91v107h128v128h107zm523-928q0-22-22-22-10 0-17 7l-542 542q-7 7-7 17 0 22 22 22 10 0 17-7l542-542q7-7 7-17zm-54-192l416 416-832 832h-416v-416zm683 96q0 53-37 90l-166 166-416-416 166-165q36-38 90-38 53 0 91 38l235 234q37 39 37 91z"/></svg></span><span class="ob" style="left:61.0px;width:22px;background:#f4351f"><svg class="ic" width="12.00" height="12.00" viewBox="0 0 1792 1792" style="left:5.00px;top:5.00px;"><path fill="#fff" d="M704 1376v-704q0-14-9-23t-23-9h-64q-14 0-23 9t-9 23v704q0 14 9 23t23 9h64q14 0 23-9t9-23zm256 0v-704q0-14-9-23t-23-9h-64q-14 0-23 9t-9 23v704q0 14 9 23t23 9h64q14 0 23-9t9-23zm256 0v-704q0-14-9-23t-23-9h-64q-14 0-23 9t-9 23v704q0 14 9 23t23 9h64q14 0 23-9t9-23zm-544-992h448l-48-117q-7-9-17-11h-317q-10 2-17 11zm928 32v64q0 14-9 23t-23 9h-96v948q0 83-47 143.500t-113 60.500h-832q-66 0-113-58.500t-47-141.500v-952h-96q-14 0-23-9t-9-23v-64q0-14 9-23t23-9h309l70-167q15-37 54-63t79-26h320q40 0 79 26t54 63l70 167h309q14 0 23 9t9 23z"/></svg></span></td></tr>
<tr class="even"><td style="padding-right:51.8px">圣罗兰口红礼盒小金条热卖</td><td>彩妆区</td><td>1280.00</td><td><svg class="img" viewBox="0 0 30 30"><rect width="30" height="30" fill="#020202"/><rect x="8.6" y="2" width="12.4" height="1.6" fill="#aaa" opacity=".7"/><rect x="3" y="8.6" width="17" height="16.2" fill="#151515"/><path d="M13.2 12.6v8.2M11.8 14.2l2.8 2.6M14.6 13.4l-2.8 5.4" stroke="#b89a3e" stroke-width=".9" fill="none"/><rect x="18.4" y="20" width="2" height="5.7" fill="#cfa23c"/><rect x="18.6" y="15.8" width="1.6" height="4.2" fill="#191712"/><rect x="18.6" y="13.6" width="1.5" height="2.3" fill="#c4161d"/><rect x="19.0" y="20" width=".7" height="5.7" fill="#ecc866"/><rect x="20.8" y="20" width="2" height="5.7" fill="#cfa23c"/><rect x="21.0" y="15.8" width="1.6" height="4.2" fill="#191712"/><rect x="21.1" y="13.6" width="1.5" height="2.3" fill="#c4161d"/><rect x="21.4" y="20" width=".7" height="5.7" fill="#ecc866"/><rect x="23.3" y="20" width="2" height="5.7" fill="#cfa23c"/><rect x="23.5" y="15.8" width="1.6" height="4.2" fill="#191712"/><rect x="23.6" y="13.6" width="1.5" height="2.3" fill="#c4161d"/><rect x="23.9" y="20" width=".7" height="5.7" fill="#ecc866"/><rect x="25.8" y="20" width="2" height="5.7" fill="#cfa23c"/><rect x="26.0" y="15.8" width="1.6" height="4.2" fill="#191712"/><rect x="26.1" y="13.6" width="1.5" height="2.3" fill="#c4161d"/><rect x="26.4" y="20" width=".7" height="5.7" fill="#ecc866"/></svg></td><td>1280.00</td><td>1.00</td><td>28</td><td>1</td><td><span class="st"><span class="dot"></span>领取成功</span></td><td>0</td><td>2023-06-03 08:27:55</td><td>2023-06-03 08:29:28</td><td>xiyang</td><td><span class="ob" style="left:8.0px;width:24px;background:#2c3e50"><svg class="ic" width="12.00" height="12.00" viewBox="0 0 1792 1792" style="left:6.00px;top:5.00px;"><path fill="#fff" d="M1792 896q0 26-19 45l-256 256q-19 19-45 19t-45-19-19-45v-128h-384v384h128q26 0 45 19t19 45-19 45l-256 256q-19 19-45 19t-45-19l-256-256q-19-19-19-45t19-45 45-19h128v-384h-384v128q0 26-19 45t-45 19-45-19l-256-256q-19-19-19-45t19-45l256-256q19-19 45-19t45 19 19 45v128h384v-384h-128q-26 0-45-19t-19-45 19-45l256-256q19-19 45-19t45 19l256 256q19 19 19 45t-19 45-45 19h-128v384h384v-128q0-26 19-45t45-19 45 19l256 256q19 19 19 45z"/></svg></span><span class="ob" style="left:35.0px;width:23px;background:#00c1a0"><svg class="ic" width="12.00" height="12.00" viewBox="0 0 1792 1792" style="left:5.50px;top:5.00px;"><path fill="#fff" d="M491 1536l91-91-235-235-91 91v107h128v128h107zm523-928q0-22-22-22-10 0-17 7l-542 542q-7 7-7 17 0 22 22 22 10 0 17-7l542-542q7-7 7-17zm-54-192l416 416-832 832h-416v-416zm683 96q0 53-37 90l-166 166-416-416 166-165q36-38 90-38 53 0 91 38l235 234q37 39 37 91z"/></svg></span><span class="ob" style="left:61.0px;width:22px;background:#f4351f"><svg class="ic" width="12.00" height="12.00" viewBox="0 0 1792 1792" style="left:5.00px;top:5.00px;"><path fill="#fff" d="M704 1376v-704q0-14-9-23t-23-9h-64q-14 0-23 9t-9 23v704q0 14 9 23t23 9h64q14 0 23-9t9-23zm256 0v-704q0-14-9-23t-23-9h-64q-14 0-23 9t-9 23v704q0 14 9 23t23 9h64q14 0 23-9t9-23zm256 0v-704q0-14-9-23t-23-9h-64q-14 0-23 9t-9 23v704q0 14 9 23t23 9h64q14 0 23-9t9-23zm-544-992h448l-48-117q-7-9-17-11h-317q-10 2-17 11zm928 32v64q0 14-9 23t-23 9h-96v948q0 83-47 143.500t-113 60.500h-832q-66 0-113-58.500t-47-141.500v-952h-96q-14 0-23-9t-9-23v-64q0-14 9-23t23-9h309l70-167q15-37 54-63t79-26h320q40 0 79 26t54 63l70 167h309q14 0 23 9t9 23z"/></svg></span></td></tr>
<tr class="odd"><td style="padding-right:9.0px">添可洗地机芙万三代 自清洗 免洗尊享版</td><td>家电区</td><td>3000.00</td><td><svg class="img" viewBox="0 0 30 30"><rect x=".5" y=".5" width="29" height="29" fill="none" stroke="#b9b9b9"/><path d="M2.5 2.5H12.6L17.5 7.4V17.5H2.5z" fill="#c4d5f7" stroke="#8b8b8b" stroke-width="1"/><path d="M12.4 2.8V7.6H17.2z" fill="#fff" stroke="#8b8b8b" stroke-width=".9" stroke-linejoin="round"/><ellipse cx="7" cy="6.9" rx="2.9" ry="1.1" fill="#fff"/><circle cx="7.6" cy="6" r="1.4" fill="#fff"/><path d="M3 17Q7.5 9.6 12.2 11.8Q15 13.4 17 17z" fill="#1eb31e"/><path d="M8.6 19L19 8.6V12.2L12.2 19z" fill="#fbfbfb"/></svg></td><td>3000.00</td><td>0.10</td><td>3</td><td>1</td><td><span class="st"><span class="dot"></span>领取成功</span></td><td>-</td><td>2023-01-14 16:24:37</td><td>无</td><td>-</td><td><span class="ob" style="left:8.0px;width:24px;background:#2c3e50"><svg class="ic" width="12.00" height="12.00" viewBox="0 0 1792 1792" style="left:6.00px;top:5.00px;"><path fill="#fff" d="M1792 896q0 26-19 45l-256 256q-19 19-45 19t-45-19-19-45v-128h-384v384h128q26 0 45 19t19 45-19 45l-256 256q-19 19-45 19t-45-19l-256-256q-19-19-19-45t19-45 45-19h128v-384h-384v128q0 26-19 45t-45 19-45-19l-256-256q-19-19-19-45t19-45l256-256q19-19 45-19t45 19 19 45v128h384v-384h-128q-26 0-45-19t-19-45 19-45l256-256q19-19 45-19t45 19l256 256q19 19 19 45t-19 45-45 19h-128v384h384v-128q0-26 19-45t45-19 45 19l256 256q19 19 19 45z"/></svg></span><span class="ob" style="left:35.0px;width:23px;background:#00c1a0"><svg class="ic" width="12.00" height="12.00" viewBox="0 0 1792 1792" style="left:5.50px;top:5.00px;"><path fill="#fff" d="M491 1536l91-91-235-235-91 91v107h128v128h107zm523-928q0-22-22-22-10 0-17 7l-542 542q-7 7-7 17 0 22 22 22 10 0 17-7l542-542q7-7 7-17zm-54-192l416 416-832 832h-416v-416zm683 96q0 53-37 90l-166 166-416-416 166-165q36-38 90-38 53 0 91 38l235 234q37 39 37 91z"/></svg></span><span class="ob" style="left:61.0px;width:22px;background:#f4351f"><svg class="ic" width="12.00" height="12.00" viewBox="0 0 1792 1792" style="left:5.00px;top:5.00px;"><path fill="#fff" d="M704 1376v-704q0-14-9-23t-23-9h-64q-14 0-23 9t-9 23v704q0 14 9 23t23 9h64q14 0 23-9t9-23zm256 0v-704q0-14-9-23t-23-9h-64q-14 0-23 9t-9 23v704q0 14 9 23t23 9h64q14 0 23-9t9-23zm256 0v-704q0-14-9-23t-23-9h-64q-14 0-23 9t-9 23v704q0 14 9 23t23 9h64q14 0 23-9t9-23zm-544-992h448l-48-117q-7-9-17-11h-317q-10 2-17 11zm928 32v64q0 14-9 23t-23 9h-96v948q0 83-47 143.500t-113 60.500h-832q-66 0-113-58.500t-47-141.500v-952h-96q-14 0-23-9t-9-23v-64q0-14 9-23t23-9h309l70-167q15-37 54-63t79-26h320q40 0 79 26t54 63l70 167h309q14 0 23 9t9 23z"/></svg></span></td></tr>
<tr class="even"><td style="padding-right:18.3px">Apple iPhone 14 Pro Max 手机 白色 1TB</td><td>数码区</td><td>10000.00</td><td><svg class="img" viewBox="0 0 30 30"><rect x=".5" y=".5" width="29" height="29" fill="none" stroke="#b9b9b9"/><path d="M2.5 2.5H12.6L17.5 7.4V17.5H2.5z" fill="#c4d5f7" stroke="#8b8b8b" stroke-width="1"/><path d="M12.4 2.8V7.6H17.2z" fill="#fff" stroke="#8b8b8b" stroke-width=".9" stroke-linejoin="round"/><ellipse cx="7" cy="6.9" rx="2.9" ry="1.1" fill="#fff"/><circle cx="7.6" cy="6" r="1.4" fill="#fff"/><path d="M3 17Q7.5 9.6 12.2 11.8Q15 13.4 17 17z" fill="#1eb31e"/><path d="M8.6 19L19 8.6V12.2L12.2 19z" fill="#fbfbfb"/></svg></td><td>10000.00</td><td>0.20</td><td>6</td><td>1</td><td><span class="st"><span class="dot"></span>领取成功</span></td><td>-</td><td>2023-01-14 21:28:13</td><td>无</td><td>-</td><td><span class="ob" style="left:8.0px;width:24px;background:#2c3e50"><svg class="ic" width="12.00" height="12.00" viewBox="0 0 1792 1792" style="left:6.00px;top:5.00px;"><path fill="#fff" d="M1792 896q0 26-19 45l-256 256q-19 19-45 19t-45-19-19-45v-128h-384v384h128q26 0 45 19t19 45-19 45l-256 256q-19 19-45 19t-45-19l-256-256q-19-19-19-45t19-45 45-19h128v-384h-384v128q0 26-19 45t-45 19-45-19l-256-256q-19-19-19-45t19-45l256-256q19-19 45-19t45 19 19 45v128h384v-384h-128q-26 0-45-19t-19-45 19-45l256-256q19-19 45-19t45 19l256 256q19 19 19 45t-19 45-45 19h-128v384h384v-128q0-26 19-45t45-19 45 19l256 256q19 19 19 45z"/></svg></span><span class="ob" style="left:35.0px;width:23px;background:#00c1a0"><svg class="ic" width="12.00" height="12.00" viewBox="0 0 1792 1792" style="left:5.50px;top:5.00px;"><path fill="#fff" d="M491 1536l91-91-235-235-91 91v107h128v128h107zm523-928q0-22-22-22-10 0-17 7l-542 542q-7 7-7 17 0 22 22 22 10 0 17-7l542-542q7-7 7-17zm-54-192l416 416-832 832h-416v-416zm683 96q0 53-37 90l-166 166-416-416 166-165q36-38 90-38 53 0 91 38l235 234q37 39 37 91z"/></svg></span><span class="ob" style="left:61.0px;width:22px;background:#f4351f"><svg class="ic" width="12.00" height="12.00" viewBox="0 0 1792 1792" style="left:5.00px;top:5.00px;"><path fill="#fff" d="M704 1376v-704q0-14-9-23t-23-9h-64q-14 0-23 9t-9 23v704q0 14 9 23t23 9h64q14 0 23-9t9-23zm256 0v-704q0-14-9-23t-23-9h-64q-14 0-23 9t-9 23v704q0 14 9 23t23 9h64q14 0 23-9t9-23zm256 0v-704q0-14-9-23t-23-9h-64q-14 0-23 9t-9 23v704q0 14 9 23t23 9h64q14 0 23-9t9-23zm-544-992h448l-48-117q-7-9-17-11h-317q-10 2-17 11zm928 32v64q0 14-9 23t-23 9h-96v948q0 83-47 143.500t-113 60.500h-832q-66 0-113-58.500t-47-141.500v-952h-96q-14 0-23-9t-9-23v-64q0-14 9-23t23-9h309l70-167q15-37 54-63t79-26h320q40 0 79 26t54 63l70 167h309q14 0 23 9t9 23z"/></svg></span></td></tr>
<tr class="odd"><td style="padding-right:9.0px">添可洗地机芙万三代 自清洗 免洗尊享版</td><td>家电区</td><td>3000.00</td><td><svg class="img" viewBox="0 0 30 30"><rect x=".5" y=".5" width="29" height="29" fill="none" stroke="#b9b9b9"/><path d="M2.5 2.5H12.6L17.5 7.4V17.5H2.5z" fill="#c4d5f7" stroke="#8b8b8b" stroke-width="1"/><path d="M12.4 2.8V7.6H17.2z" fill="#fff" stroke="#8b8b8b" stroke-width=".9" stroke-linejoin="round"/><ellipse cx="7" cy="6.9" rx="2.9" ry="1.1" fill="#fff"/><circle cx="7.6" cy="6" r="1.4" fill="#fff"/><path d="M3 17Q7.5 9.6 12.2 11.8Q15 13.4 17 17z" fill="#1eb31e"/><path d="M8.6 19L19 8.6V12.2L12.2 19z" fill="#fbfbfb"/></svg></td><td>3000.00</td><td>0.10</td><td>19</td><td>1</td><td><span class="st"><span class="dot"></span>领取成功</span></td><td>-</td><td>2023-01-16 17:32:47</td><td>无</td><td>-</td><td><span class="ob" style="left:8.0px;width:24px;background:#2c3e50"><svg class="ic" width="12.00" height="12.00" viewBox="0 0 1792 1792" style="left:6.00px;top:5.00px;"><path fill="#fff" d="M1792 896q0 26-19 45l-256 256q-19 19-45 19t-45-19-19-45v-128h-384v384h128q26 0 45 19t19 45-19 45l-256 256q-19 19-45 19t-45-19l-256-256q-19-19-19-45t19-45 45-19h128v-384h-384v128q0 26-19 45t-45 19-45-19l-256-256q-19-19-19-45t19-45l256-256q19-19 45-19t45 19 19 45v128h384v-384h-128q-26 0-45-19t-19-45 19-45l256-256q19-19 45-19t45 19l256 256q19 19 19 45t-19 45-45 19h-128v384h384v-128q0-26 19-45t45-19 45 19l256 256q19 19 19 45z"/></svg></span><span class="ob" style="left:35.0px;width:23px;background:#00c1a0"><svg class="ic" width="12.00" height="12.00" viewBox="0 0 1792 1792" style="left:5.50px;top:5.00px;"><path fill="#fff" d="M491 1536l91-91-235-235-91 91v107h128v128h107zm523-928q0-22-22-22-10 0-17 7l-542 542q-7 7-7 17 0 22 22 22 10 0 17-7l542-542q7-7 7-17zm-54-192l416 416-832 832h-416v-416zm683 96q0 53-37 90l-166 166-416-416 166-165q36-38 90-38 53 0 91 38l235 234q37 39 37 91z"/></svg></span><span class="ob" style="left:61.0px;width:22px;background:#f4351f"><svg class="ic" width="12.00" height="12.00" viewBox="0 0 1792 1792" style="left:5.00px;top:5.00px;"><path fill="#fff" d="M704 1376v-704q0-14-9-23t-23-9h-64q-14 0-23 9t-9 23v704q0 14 9 23t23 9h64q14 0 23-9t9-23zm256 0v-704q0-14-9-23t-23-9h-64q-14 0-23 9t-9 23v704q0 14 9 23t23 9h64q14 0 23-9t9-23zm256 0v-704q0-14-9-23t-23-9h-64q-14 0-23 9t-9 23v704q0 14 9 23t23 9h64q14 0 23-9t9-23zm-544-992h448l-48-117q-7-9-17-11h-317q-10 2-17 11zm928 32v64q0 14-9 23t-23 9h-96v948q0 83-47 143.500t-113 60.500h-832q-66 0-113-58.500t-47-141.500v-952h-96q-14 0-23-9t-9-23v-64q0-14 9-23t23-9h309l70-167q15-37 54-63t79-26h320q40 0 79 26t54 63l70 167h309q14 0 23 9t9 23z"/></svg></span></td></tr>
<tr class="even"><td style="padding-right:9.0px">添可洗地机芙万三代 自清洗 免洗尊享版</td><td>家电区</td><td>3000.00</td><td><svg class="img" viewBox="0 0 30 30"><rect x=".5" y=".5" width="29" height="29" fill="none" stroke="#b9b9b9"/><path d="M2.5 2.5H12.6L17.5 7.4V17.5H2.5z" fill="#c4d5f7" stroke="#8b8b8b" stroke-width="1"/><path d="M12.4 2.8V7.6H17.2z" fill="#fff" stroke="#8b8b8b" stroke-width=".9" stroke-linejoin="round"/><ellipse cx="7" cy="6.9" rx="2.9" ry="1.1" fill="#fff"/><circle cx="7.6" cy="6" r="1.4" fill="#fff"/><path d="M3 17Q7.5 9.6 12.2 11.8Q15 13.4 17 17z" fill="#1eb31e"/><path d="M8.6 19L19 8.6V12.2L12.2 19z" fill="#fbfbfb"/></svg></td><td>3000.00</td><td>0.10</td><td>20</td><td>1</td><td><span class="st"><span class="dot"></span>领取成功</span></td><td>-</td><td>2023-01-16 17:33:22</td><td>无</td><td>-</td><td><span class="ob" style="left:8.0px;width:24px;background:#2c3e50"><svg class="ic" width="12.00" height="12.00" viewBox="0 0 1792 1792" style="left:6.00px;top:5.00px;"><path fill="#fff" d="M1792 896q0 26-19 45l-256 256q-19 19-45 19t-45-19-19-45v-128h-384v384h128q26 0 45 19t19 45-19 45l-256 256q-19 19-45 19t-45-19l-256-256q-19-19-19-45t19-45 45-19h128v-384h-384v128q0 26-19 45t-45 19-45-19l-256-256q-19-19-19-45t19-45l256-256q19-19 45-19t45 19 19 45v128h384v-384h-128q-26 0-45-19t-19-45 19-45l256-256q19-19 45-19t45 19l256 256q19 19 19 45t-19 45-45 19h-128v384h384v-128q0-26 19-45t45-19 45 19l256 256q19 19 19 45z"/></svg></span><span class="ob" style="left:35.0px;width:23px;background:#00c1a0"><svg class="ic" width="12.00" height="12.00" viewBox="0 0 1792 1792" style="left:5.50px;top:5.00px;"><path fill="#fff" d="M491 1536l91-91-235-235-91 91v107h128v128h107zm523-928q0-22-22-22-10 0-17 7l-542 542q-7 7-7 17 0 22 22 22 10 0 17-7l542-542q7-7 7-17zm-54-192l416 416-832 832h-416v-416zm683 96q0 53-37 90l-166 166-416-416 166-165q36-38 90-38 53 0 91 38l235 234q37 39 37 91z"/></svg></span><span class="ob" style="left:61.0px;width:22px;background:#f4351f"><svg class="ic" width="12.00" height="12.00" viewBox="0 0 1792 1792" style="left:5.00px;top:5.00px;"><path fill="#fff" d="M704 1376v-704q0-14-9-23t-23-9h-64q-14 0-23 9t-9 23v704q0 14 9 23t23 9h64q14 0 23-9t9-23zm256 0v-704q0-14-9-23t-23-9h-64q-14 0-23 9t-9 23v704q0 14 9 23t23 9h64q14 0 23-9t9-23zm256 0v-704q0-14-9-23t-23-9h-64q-14 0-23 9t-9 23v704q0 14 9 23t23 9h64q14 0 23-9t9-23zm-544-992h448l-48-117q-7-9-17-11h-317q-10 2-17 11zm928 32v64q0 14-9 23t-23 9h-96v948q0 83-47 143.500t-113 60.500h-832q-66 0-113-58.500t-47-141.500v-952h-96q-14 0-23-9t-9-23v-64q0-14 9-23t23-9h309l70-167q15-37 54-63t79-26h320q40 0 79 26t54 63l70 167h309q14 0 23 9t9 23z"/></svg></span></td></tr>
<tr class="odd"><td style="padding-right:18.3px">Apple iPhone 14 Pro Max 手机 白色 1TB</td><td>数码区</td><td>10000.00</td><td><svg class="img" viewBox="0 0 30 30"><rect x=".5" y=".5" width="29" height="29" fill="none" stroke="#b9b9b9"/><path d="M2.5 2.5H12.6L17.5 7.4V17.5H2.5z" fill="#c4d5f7" stroke="#8b8b8b" stroke-width="1"/><path d="M12.4 2.8V7.6H17.2z" fill="#fff" stroke="#8b8b8b" stroke-width=".9" stroke-linejoin="round"/><ellipse cx="7" cy="6.9" rx="2.9" ry="1.1" fill="#fff"/><circle cx="7.6" cy="6" r="1.4" fill="#fff"/><path d="M3 17Q7.5 9.6 12.2 11.8Q15 13.4 17 17z" fill="#1eb31e"/><path d="M8.6 19L19 8.6V12.2L12.2 19z" fill="#fbfbfb"/></svg></td><td>10000.00</td><td>0.20</td><td>10</td><td>1</td><td><span class="st"><span class="dot"></span>领取成功</span></td><td>-</td><td>2023-01-15 10:03:41</td><td>无</td><td>-</td><td><span class="ob" style="left:8.0px;width:24px;background:#2c3e50"><svg class="ic" width="12.00" height="12.00" viewBox="0 0 1792 1792" style="left:6.00px;top:5.00px;"><path fill="#fff" d="M1792 896q0 26-19 45l-256 256q-19 19-45 19t-45-19-19-45v-128h-384v384h128q26 0 45 19t19 45-19 45l-256 256q-19 19-45 19t-45-19l-256-256q-19-19-19-45t19-45 45-19h128v-384h-384v128q0 26-19 45t-45 19-45-19l-256-256q-19-19-19-45t19-45l256-256q19-19 45-19t45 19 19 45v128h384v-384h-128q-26 0-45-19t-19-45 19-45l256-256q19-19 45-19t45 19l256 256q19 19 19 45t-19 45-45 19h-128v384h384v-128q0-26 19-45t45-19 45 19l256 256q19 19 19 45z"/></svg></span><span class="ob" style="left:35.0px;width:23px;background:#00c1a0"><svg class="ic" width="12.00" height="12.00" viewBox="0 0 1792 1792" style="left:5.50px;top:5.00px;"><path fill="#fff" d="M491 1536l91-91-235-235-91 91v107h128v128h107zm523-928q0-22-22-22-10 0-17 7l-542 542q-7 7-7 17 0 22 22 22 10 0 17-7l542-542q7-7 7-17zm-54-192l416 416-832 832h-416v-416zm683 96q0 53-37 90l-166 166-416-416 166-165q36-38 90-38 53 0 91 38l235 234q37 39 37 91z"/></svg></span><span class="ob" style="left:61.0px;width:22px;background:#f4351f"><svg class="ic" width="12.00" height="12.00" viewBox="0 0 1792 1792" style="left:5.00px;top:5.00px;"><path fill="#fff" d="M704 1376v-704q0-14-9-23t-23-9h-64q-14 0-23 9t-9 23v704q0 14 9 23t23 9h64q14 0 23-9t9-23zm256 0v-704q0-14-9-23t-23-9h-64q-14 0-23 9t-9 23v704q0 14 9 23t23 9h64q14 0 23-9t9-23zm256 0v-704q0-14-9-23t-23-9h-64q-14 0-23 9t-9 23v704q0 14 9 23t23 9h64q14 0 23-9t9-23zm-544-992h448l-48-117q-7-9-17-11h-317q-10 2-17 11zm928 32v64q0 14-9 23t-23 9h-96v948q0 83-47 143.500t-113 60.500h-832q-66 0-113-58.500t-47-141.500v-952h-96q-14 0-23-9t-9-23v-64q0-14 9-23t23-9h309l70-167q15-37 54-63t79-26h320q40 0 79 26t54 63l70 167h309q14 0 23 9t9 23z"/></svg></span></td></tr>
<tr class="even"><td style="padding-right:18.3px">Apple iPhone 14 Pro Max 手机 白色 1TB</td><td>数码区</td><td>10000.00</td><td><svg class="img" viewBox="0 0 30 30"><rect x=".5" y=".5" width="29" height="29" fill="none" stroke="#b9b9b9"/><path d="M2.5 2.5H12.6L17.5 7.4V17.5H2.5z" fill="#c4d5f7" stroke="#8b8b8b" stroke-width="1"/><path d="M12.4 2.8V7.6H17.2z" fill="#fff" stroke="#8b8b8b" stroke-width=".9" stroke-linejoin="round"/><ellipse cx="7" cy="6.9" rx="2.9" ry="1.1" fill="#fff"/><circle cx="7.6" cy="6" r="1.4" fill="#fff"/><path d="M3 17Q7.5 9.6 12.2 11.8Q15 13.4 17 17z" fill="#1eb31e"/><path d="M8.6 19L19 8.6V12.2L12.2 19z" fill="#fbfbfb"/></svg></td><td>10000.00</td><td>0.20</td><td>10</td><td>1</td><td><span class="st"><span class="dot"></span>领取成功</span></td><td>-</td><td>2023-01-15 10:03:47</td><td>无</td><td>-</td><td><span class="ob" style="left:8.0px;width:24px;background:#2c3e50"><svg class="ic" width="12.00" height="12.00" viewBox="0 0 1792 1792" style="left:6.00px;top:5.00px;"><path fill="#fff" d="M1792 896q0 26-19 45l-256 256q-19 19-45 19t-45-19-19-45v-128h-384v384h128q26 0 45 19t19 45-19 45l-256 256q-19 19-45 19t-45-19l-256-256q-19-19-19-45t19-45 45-19h128v-384h-384v128q0 26-19 45t-45 19-45-19l-256-256q-19-19-19-45t19-45l256-256q19-19 45-19t45 19 19 45v128h384v-384h-128q-26 0-45-19t-19-45 19-45l256-256q19-19 45-19t45 19l256 256q19 19 19 45t-19 45-45 19h-128v384h384v-128q0-26 19-45t45-19 45 19l256 256q19 19 19 45z"/></svg></span><span class="ob" style="left:35.0px;width:23px;background:#00c1a0"><svg class="ic" width="12.00" height="12.00" viewBox="0 0 1792 1792" style="left:5.50px;top:5.00px;"><path fill="#fff" d="M491 1536l91-91-235-235-91 91v107h128v128h107zm523-928q0-22-22-22-10 0-17 7l-542 542q-7 7-7 17 0 22 22 22 10 0 17-7l542-542q7-7 7-17zm-54-192l416 416-832 832h-416v-416zm683 96q0 53-37 90l-166 166-416-416 166-165q36-38 90-38 53 0 91 38l235 234q37 39 37 91z"/></svg></span><span class="ob" style="left:61.0px;width:22px;background:#f4351f"><svg class="ic" width="12.00" height="12.00" viewBox="0 0 1792 1792" style="left:5.00px;top:5.00px;"><path fill="#fff" d="M704 1376v-704q0-14-9-23t-23-9h-64q-14 0-23 9t-9 23v704q0 14 9 23t23 9h64q14 0 23-9t9-23zm256 0v-704q0-14-9-23t-23-9h-64q-14 0-23 9t-9 23v704q0 14 9 23t23 9h64q14 0 23-9t9-23zm256 0v-704q0-14-9-23t-23-9h-64q-14 0-23 9t-9 23v704q0 14 9 23t23 9h64q14 0 23-9t9-23zm-544-992h448l-48-117q-7-9-17-11h-317q-10 2-17 11zm928 32v64q0 14-9 23t-23 9h-96v948q0 83-47 143.500t-113 60.500h-832q-66 0-113-58.500t-47-141.500v-952h-96q-14 0-23-9t-9-23v-64q0-14 9-23t23-9h309l70-167q15-37 54-63t79-26h320q40 0 79 26t54 63l70 167h309q14 0 23 9t9 23z"/></svg></span></td></tr>
<tr class="odd"><td style="padding-right:18.3px">Apple iPhone 14 Pro Max 手机 白色 1TB</td><td>数码区</td><td>10000.00</td><td><svg class="img" viewBox="0 0 30 30"><rect x=".5" y=".5" width="29" height="29" fill="none" stroke="#b9b9b9"/><path d="M2.5 2.5H12.6L17.5 7.4V17.5H2.5z" fill="#c4d5f7" stroke="#8b8b8b" stroke-width="1"/><path d="M12.4 2.8V7.6H17.2z" fill="#fff" stroke="#8b8b8b" stroke-width=".9" stroke-linejoin="round"/><ellipse cx="7" cy="6.9" rx="2.9" ry="1.1" fill="#fff"/><circle cx="7.6" cy="6" r="1.4" fill="#fff"/><path d="M3 17Q7.5 9.6 12.2 11.8Q15 13.4 17 17z" fill="#1eb31e"/><path d="M8.6 19L19 8.6V12.2L12.2 19z" fill="#fbfbfb"/></svg></td><td>10000.00</td><td>0.20</td><td>10</td><td>1</td><td><span class="st"><span class="dot"></span>领取成功</span></td><td>-</td><td>2023-01-15 10:03:51</td><td>无</td><td>-</td><td><span class="ob" style="left:8.0px;width:24px;background:#2c3e50"><svg class="ic" width="12.00" height="12.00" viewBox="0 0 1792 1792" style="left:6.00px;top:5.00px;"><path fill="#fff" d="M1792 896q0 26-19 45l-256 256q-19 19-45 19t-45-19-19-45v-128h-384v384h128q26 0 45 19t19 45-19 45l-256 256q-19 19-45 19t-45-19l-256-256q-19-19-19-45t19-45 45-19h128v-384h-384v128q0 26-19 45t-45 19-45-19l-256-256q-19-19-19-45t19-45l256-256q19-19 45-19t45 19 19 45v128h384v-384h-128q-26 0-45-19t-19-45 19-45l256-256q19-19 45-19t45 19l256 256q19 19 19 45t-19 45-45 19h-128v384h384v-128q0-26 19-45t45-19 45 19l256 256q19 19 19 45z"/></svg></span><span class="ob" style="left:35.0px;width:23px;background:#00c1a0"><svg class="ic" width="12.00" height="12.00" viewBox="0 0 1792 1792" style="left:5.50px;top:5.00px;"><path fill="#fff" d="M491 1536l91-91-235-235-91 91v107h128v128h107zm523-928q0-22-22-22-10 0-17 7l-542 542q-7 7-7 17 0 22 22 22 10 0 17-7l542-542q7-7 7-17zm-54-192l416 416-832 832h-416v-416zm683 96q0 53-37 90l-166 166-416-416 166-165q36-38 90-38 53 0 91 38l235 234q37 39 37 91z"/></svg></span><span class="ob" style="left:61.0px;width:22px;background:#f4351f"><svg class="ic" width="12.00" height="12.00" viewBox="0 0 1792 1792" style="left:5.00px;top:5.00px;"><path fill="#fff" d="M704 1376v-704q0-14-9-23t-23-9h-64q-14 0-23 9t-9 23v704q0 14 9 23t23 9h64q14 0 23-9t9-23zm256 0v-704q0-14-9-23t-23-9h-64q-14 0-23 9t-9 23v704q0 14 9 23t23 9h64q14 0 23-9t9-23zm256 0v-704q0-14-9-23t-23-9h-64q-14 0-23 9t-9 23v704q0 14 9 23t23 9h64q14 0 23-9t9-23zm-544-992h448l-48-117q-7-9-17-11h-317q-10 2-17 11zm928 32v64q0 14-9 23t-23 9h-96v948q0 83-47 143.500t-113 60.500h-832q-66 0-113-58.500t-47-141.500v-952h-96q-14 0-23-9t-9-23v-64q0-14 9-23t23-9h309l70-167q15-37 54-63t79-26h320q40 0 79 26t54 63l70 167h309q14 0 23 9t9 23z"/></svg></span></td></tr>
<tr class="even"><td style="padding-right:9.0px">添可洗地机芙万三代 自清洗 免洗尊享版</td><td>家电区</td><td>3000.00</td><td><svg class="img" viewBox="0 0 30 30"><rect x=".5" y=".5" width="29" height="29" fill="none" stroke="#b9b9b9"/><path d="M2.5 2.5H12.6L17.5 7.4V17.5H2.5z" fill="#c4d5f7" stroke="#8b8b8b" stroke-width="1"/><path d="M12.4 2.8V7.6H17.2z" fill="#fff" stroke="#8b8b8b" stroke-width=".9" stroke-linejoin="round"/><ellipse cx="7" cy="6.9" rx="2.9" ry="1.1" fill="#fff"/><circle cx="7.6" cy="6" r="1.4" fill="#fff"/><path d="M3 17Q7.5 9.6 12.2 11.8Q15 13.4 17 17z" fill="#1eb31e"/><path d="M8.6 19L19 8.6V12.2L12.2 19z" fill="#fbfbfb"/></svg></td><td>3000.00</td><td>0.10</td><td>16</td><td>1</td><td><span class="st"><span class="dot"></span>领取成功</span></td><td>-</td><td>2023-01-16 17:31:24</td><td>无</td><td>-</td><td><span class="ob" style="left:8.0px;width:24px;background:#2c3e50"><svg class="ic" width="12.00" height="12.00" viewBox="0 0 1792 1792" style="left:6.00px;top:5.00px;"><path fill="#fff" d="M1792 896q0 26-19 45l-256 256q-19 19-45 19t-45-19-19-45v-128h-384v384h128q26 0 45 19t19 45-19 45l-256 256q-19 19-45 19t-45-19l-256-256q-19-19-19-45t19-45 45-19h128v-384h-384v128q0 26-19 45t-45 19-45-19l-256-256q-19-19-19-45t19-45l256-256q19-19 45-19t45 19 19 45v128h384v-384h-128q-26 0-45-19t-19-45 19-45l256-256q19-19 45-19t45 19l256 256q19 19 19 45t-19 45-45 19h-128v384h384v-128q0-26 19-45t45-19 45 19l256 256q19 19 19 45z"/></svg></span><span class="ob" style="left:35.0px;width:23px;background:#00c1a0"><svg class="ic" width="12.00" height="12.00" viewBox="0 0 1792 1792" style="left:5.50px;top:5.00px;"><path fill="#fff" d="M491 1536l91-91-235-235-91 91v107h128v128h107zm523-928q0-22-22-22-10 0-17 7l-542 542q-7 7-7 17 0 22 22 22 10 0 17-7l542-542q7-7 7-17zm-54-192l416 416-832 832h-416v-416zm683 96q0 53-37 90l-166 166-416-416 166-165q36-38 90-38 53 0 91 38l235 234q37 39 37 91z"/></svg></span><span class="ob" style="left:61.0px;width:22px;background:#f4351f"><svg class="ic" width="12.00" height="12.00" viewBox="0 0 1792 1792" style="left:5.00px;top:5.00px;"><path fill="#fff" d="M704 1376v-704q0-14-9-23t-23-9h-64q-14 0-23 9t-9 23v704q0 14 9 23t23 9h64q14 0 23-9t9-23zm256 0v-704q0-14-9-23t-23-9h-64q-14 0-23 9t-9 23v704q0 14 9 23t23 9h64q14 0 23-9t9-23zm256 0v-704q0-14-9-23t-23-9h-64q-14 0-23 9t-9 23v704q0 14 9 23t23 9h64q14 0 23-9t9-23zm-544-992h448l-48-117q-7-9-17-11h-317q-10 2-17 11zm928 32v64q0 14-9 23t-23 9h-96v948q0 83-47 143.500t-113 60.500h-832q-66 0-113-58.500t-47-141.500v-952h-96q-14 0-23-9t-9-23v-64q0-14 9-23t23-9h309l70-167q15-37 54-63t79-26h320q40 0 79 26t54 63l70 167h309q14 0 23 9t9 23z"/></svg></span></td></tr>
</tbody></table></div>
<div id="hscroll"><div id="hthumb"></div></div>
<div id="pinfo">显示第 1 到第 10 条记录，总共 10 条记录</div>
</div>
<div id="wline"></div>
<div id="vscroll"><div id="vthumb"></div></div>
</body></html>
